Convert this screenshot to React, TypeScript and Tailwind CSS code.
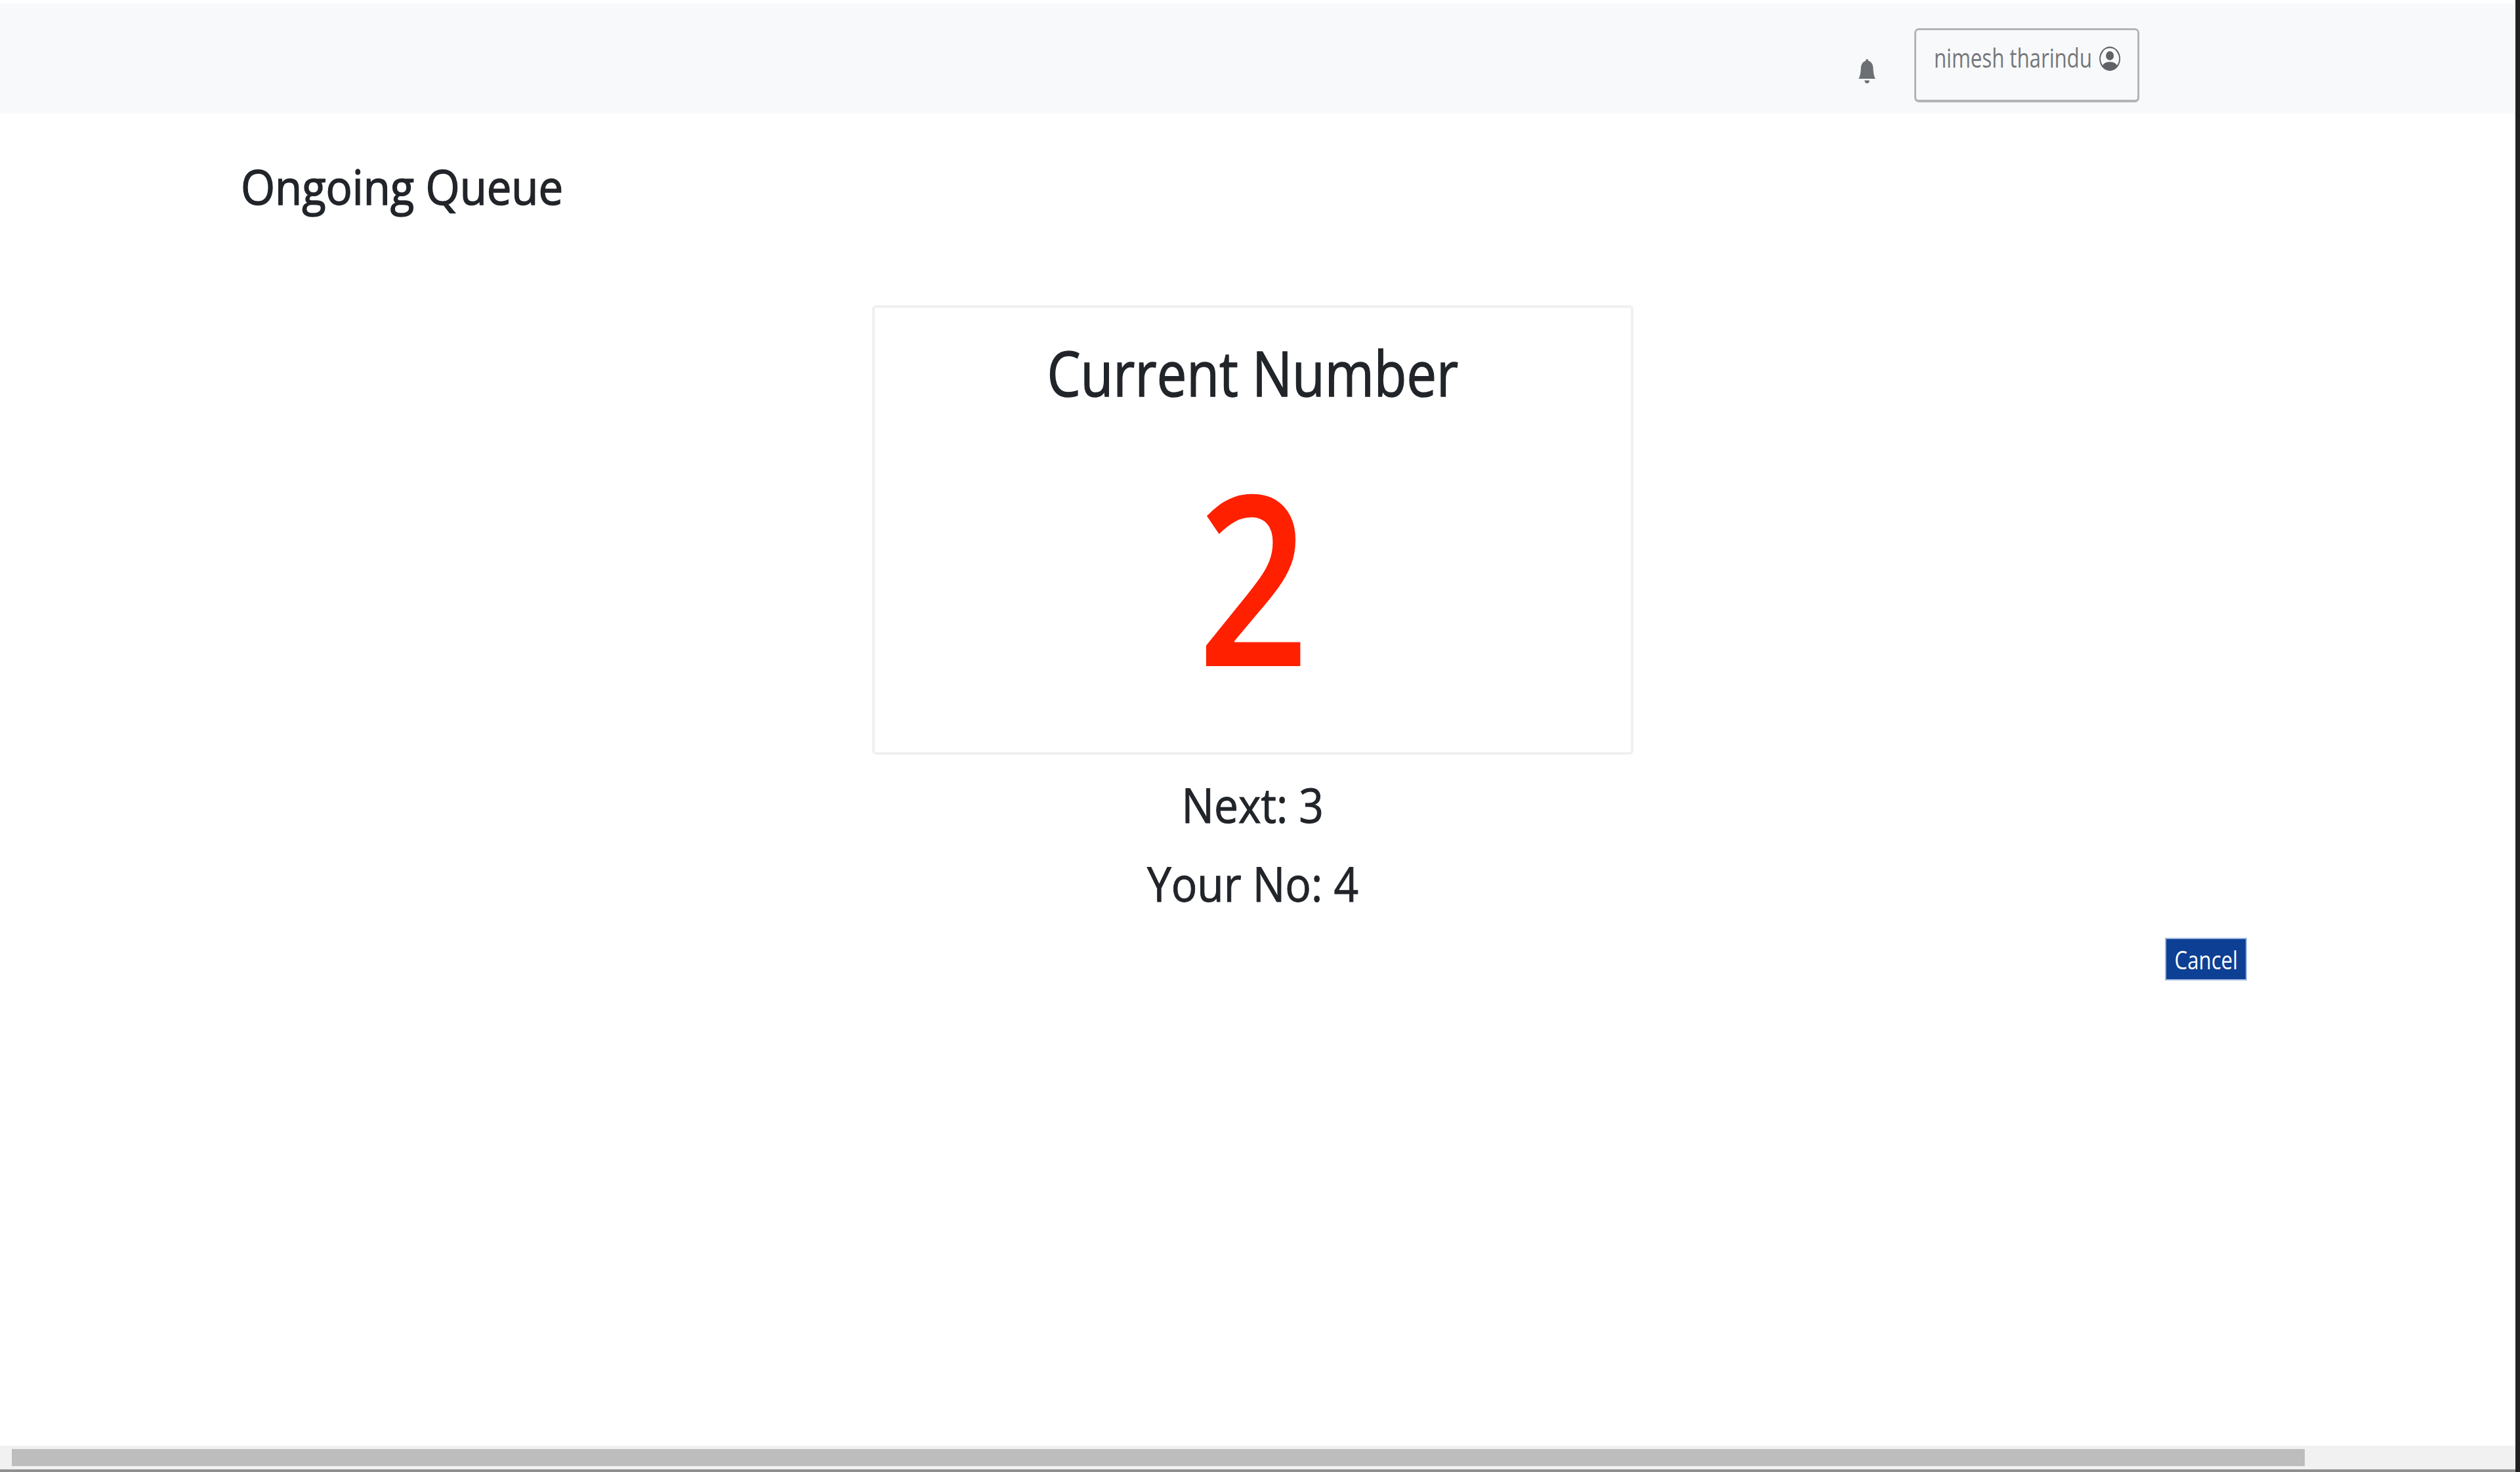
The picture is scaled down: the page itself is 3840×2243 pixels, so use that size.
import { BsBellFill, BsPersonCircle } from "react-icons/bs";

const font = "font-['Open_Sans','Liberation_Sans',sans-serif]";

function Navbar() {
  return (
    <header className="flex h-[168px] shrink-0 items-center justify-end gap-[57px] bg-[#f8f9fa] pr-[573px]">
      <BsBellFill
        preserveAspectRatio="none"
        className="mt-[38px] h-[37px] w-[30px] text-[#6c6f73]"
      />
      <button
        type="button"
        className="mt-[20px] flex h-[113px] w-[343px] items-start justify-center gap-[9px] rounded-[7px] border-[3px] border-b-[4px] border-[#b4b4b4] pt-[17px] text-[#74777b]"
      >
        <span className="inline-block w-[243px] origin-left scale-x-[0.82] scale-y-[1.05] whitespace-nowrap text-left text-[38px] leading-[48px]">
          nimesh tharindu
        </span>
        <BsPersonCircle
          preserveAspectRatio="none"
          className="mt-[8px] h-[37px] w-[32px] text-[#5f6266]"
        />
      </button>
    </header>
  );
}

function QueueCard() {
  return (
    <div className="flex h-[685px] w-[1160px] flex-col items-center rounded-[6px] border-[4px] border-[#f0f0f0]">
      <h2 className="mt-[38px] scale-x-[0.845] whitespace-nowrap text-[96px] font-medium leading-[120px] text-[#212529] [-webkit-text-stroke:1.5px_#212529]">
        Current Number
      </h2>
      <p className="mt-[68px] scale-x-[0.82] text-[362px] font-semibold leading-[360px] text-[#ff2000]">2</p>
    </div>
  );
}

function Scrollbar() {
  return (
    <div className="mt-auto flex h-[40px] shrink-0 flex-col">
      <div className="flex h-[36px] items-center bg-[#f1f1f1]">
        <div className="h-[26px] w-[18px]" />
        <div className="h-[26px] w-[3494px] bg-[#bdbdbd]" />
      </div>
      <div className="h-[4px] bg-[#8f8f8f]" />
    </div>
  );
}

export default function App() {
  return (
    <div className={`flex h-[2243px] w-full overflow-hidden bg-white ${font}`}>
      <div className="flex min-w-0 flex-1 flex-col pt-[5px]">
        <Navbar />
        <main className="flex flex-col pr-[15px]">
          <h1 className="ml-[367px] mt-[63px] origin-left scale-x-[0.905] whitespace-nowrap text-[74px] font-medium leading-[96px] text-[#212529] [-webkit-text-stroke:1.5px_#212529]">
            Ongoing Queue
          </h1>
          <div className="mt-[133px] flex flex-col items-center">
            <QueueCard />
            <p className="mt-[26px] scale-x-[0.89] text-[74px] font-medium leading-[100px] text-[#212529] [-webkit-text-stroke:1px_#212529]">Next: 3</p>
            <p className="mt-[20px] scale-x-[0.89] text-[74px] font-medium leading-[100px] text-[#212529] [-webkit-text-stroke:1px_#212529]">Your No: 4</p>
          </div>
          <div className="mt-[33px] flex justify-end pr-[394px]">
            <button
              type="button"
              className="h-[65px] w-[125px] border-2 border-[#9db8e0] bg-[#0d3f94] text-[38px] leading-none text-white"
            >
              <span className="inline-block scale-x-[0.82]">Cancel</span>
            </button>
          </div>
        </main>
        <Scrollbar />
      </div>
      <div className="w-[7px] shrink-0 bg-[#222222]" />
    </div>
  );
}
